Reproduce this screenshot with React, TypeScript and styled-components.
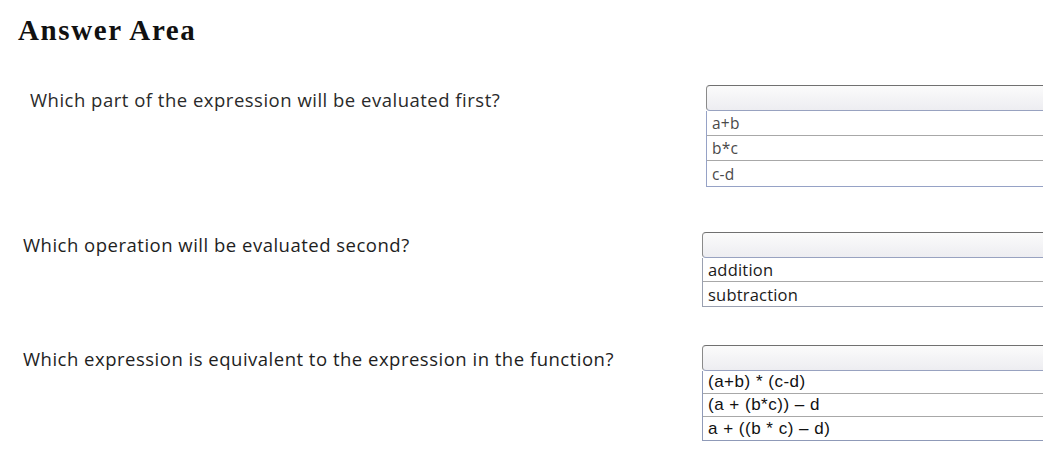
import React, { FC } from "react";
import styled, { createGlobalStyle } from "styled-components";

const GlobalStyle = createGlobalStyle`
  html, body {
    margin: 0;
    padding: 0;
    background: #ffffff;
    overflow: hidden;
  }
`;

const Page = styled.div`
  width: 1043px;
  height: 462px;
  overflow: hidden;
  padding-top: 14px;
  box-sizing: border-box;
`;

const Title = styled.h1`
  margin: 0 0 0 18px;
  font-family: "Liberation Serif", "Times New Roman", serif;
  font-weight: 700;
  font-size: 29px;
  line-height: 32px;
  letter-spacing: 1.6px;
  color: #111;
`;

const Block = styled.div<{ $top: number; $left: number }>`
  display: grid;
  grid-template-columns: ${(p) => p.$left}px 1fr;
  margin-top: ${(p) => p.$top}px;
`;

const Question = styled.div<{ $indent: number; $drop: number; $tone: string }>`
  padding-left: ${(p) => p.$indent}px;
  margin-top: ${(p) => p.$drop}px;
  font-family: "Open Sans", "Noto Sans", sans-serif;
  font-size: 18.5px;
  line-height: 22px;
  letter-spacing: 0.5px;
  color: ${(p) => p.$tone};
`;

const Dropdown = styled.div`
  margin-right: -30px;
`;

const Header = styled.div`
  height: 26px;
  box-sizing: border-box;
  border: 1px solid #8a8a8a;
  border-top-color: #707070;
  border-bottom-color: #98a2c0;
  border-radius: 4px 0 0 4px;
  background: linear-gradient(#fbfbfb, #ededf1);
`;

const Options = styled.div<{ $edge: string }>`
  border-left: 1px solid ${(p) => p.$edge};
  border-bottom: 1px solid ${(p) => p.$edge};
`;

const Option = styled.div<{ $h: number; $font: string; $size: number; $space: number; $tone: string }>`
  height: ${(p) => p.$h}px;
  box-sizing: border-box;
  padding-left: 5px;
  border-bottom: 1px solid #a8a8a8;
  display: flex;
  align-items: center;
  font-family: ${(p) => p.$font};
  font-size: ${(p) => p.$size}px;
  letter-spacing: ${(p) => p.$space}px;
  color: ${(p) => p.$tone};

  &:last-child {
    border-bottom: 0;
  }
`;

type Item = {
  top: number;
  left: number;
  question: string;
  indent: number;
  drop: number;
  tone: string;
  rowH: number;
  font: string;
  size: number;
  space: number;
  optTone: string;
  edge: string;
  options: string[];
};

const items: Item[] = [
  {
    top: 39,
    left: 706,
    question: "Which part of the expression will be evaluated first?",
    indent: 30,
    drop: 4,
    tone: "#2a2a2a",
    rowH: 25,
    font: '"Open Sans", "Noto Sans", sans-serif',
    size: 15.5,
    space: 0.2,
    optTone: "#4a4a4a",
    edge: "#96a2c6",
    options: ["a+b", "b*c", "c-d"],
  },
  {
    top: 45,
    left: 702,
    question: "Which operation will be evaluated second?",
    indent: 23,
    drop: 2,
    tone: "#1e1e1e",
    rowH: 24,
    font: '"Open Sans", "Noto Sans", sans-serif',
    size: 16.5,
    space: 0.2,
    optTone: "#1a1a1a",
    edge: "#9aa0b0",
    options: ["addition", "subtraction"],
  },
  {
    top: 38,
    left: 702,
    question: "Which expression is equivalent to the expression in the function?",
    indent: 23,
    drop: 3,
    tone: "#1e1e1e",
    rowH: 23,
    font: '"Liberation Sans", Arial, sans-serif',
    size: 17,
    space: 0.5,
    optTone: "#111",
    edge: "#8f9ab8",
    options: ["(a+b) * (c-d)", "(a + (b*c)) – d", "a + ((b * c) – d)"],
  },
];

const App: FC = () => {
  return (
    <Page>
      <GlobalStyle />
      <Title>Answer Area</Title>
      {items.map((it) => (
        <Block key={it.question} $top={it.top} $left={it.left}>
          <Question $indent={it.indent} $drop={it.drop} $tone={it.tone}>
            {it.question}
          </Question>
          <Dropdown>
            <Header />
            <Options $edge={it.edge}>
              {it.options.map((o) => (
                <Option
                  key={o}
                  $h={it.rowH}
                  $font={it.font}
                  $size={it.size}
                  $space={it.space}
                  $tone={it.optTone}
                >
                  {o}
                </Option>
              ))}
            </Options>
          </Dropdown>
        </Block>
      ))}
    </Page>
  );
};

export default App;
